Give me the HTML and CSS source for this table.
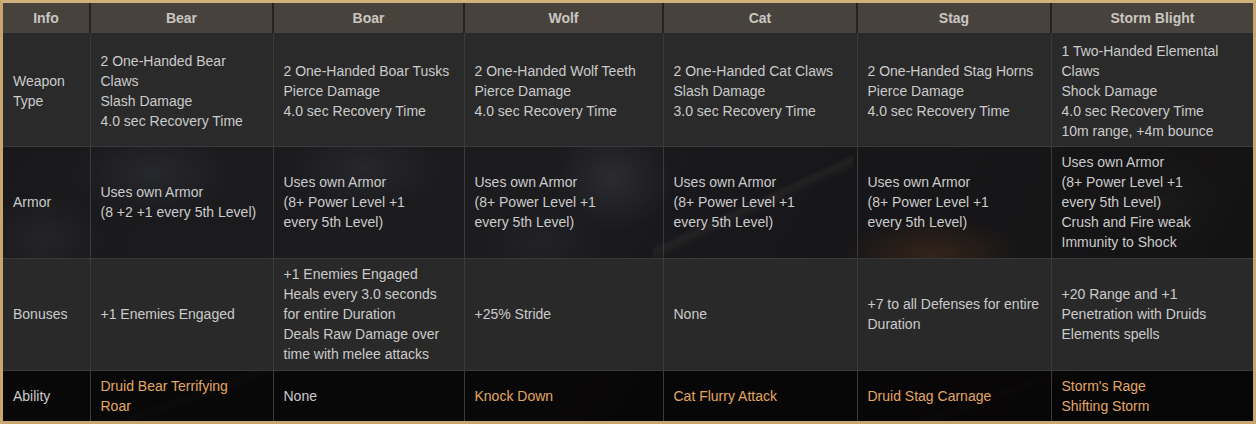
FILE: index.html
```html
<!DOCTYPE html>
<html>
<head>
<meta charset="utf-8">
<link rel="stylesheet" href="styles.css">
</head>
<body>
<div class="frame">
<table class="forms">
<colgroup>
<col class="c-info"><col class="c-bear"><col class="c-boar"><col class="c-wolf"><col class="c-cat"><col class="c-stag"><col class="c-storm">
</colgroup>
<thead>
<tr class="head">
<th>Info</th><th>Bear</th><th>Boar</th><th>Wolf</th><th>Cat</th><th>Stag</th><th>Storm Blight</th>
</tr>
</thead>
<tbody>
<tr class="r-weapon">
<td>Weapon Type</td>
<td>2 One-Handed Bear Claws<br>Slash Damage<br>4.0 sec Recovery Time</td>
<td>2 One-Handed Boar Tusks<br>Pierce Damage<br>4.0 sec Recovery Time</td>
<td>2 One-Handed Wolf Teeth<br>Pierce Damage<br>4.0 sec Recovery Time</td>
<td>2 One-Handed Cat Claws<br>Slash Damage<br>3.0 sec Recovery Time</td>
<td>2 One-Handed Stag Horns<br>Pierce Damage<br>4.0 sec Recovery Time</td>
<td>1 Two-Handed Elemental Claws<br>Shock Damage<br>4.0 sec Recovery Time<br>10m range, +4m bounce</td>
</tr>
<tr class="r-armor">
<td>Armor</td>
<td>Uses own Armor<br>(8 +2 +1 every 5th Level)</td>
<td>Uses own Armor<br>(8+ Power Level +1<br>every 5th Level)</td>
<td>Uses own Armor<br>(8+ Power Level +1<br>every 5th Level)</td>
<td>Uses own Armor<br>(8+ Power Level +1<br>every 5th Level)</td>
<td>Uses own Armor<br>(8+ Power Level +1<br>every 5th Level)</td>
<td>Uses own Armor<br>(8+ Power Level +1<br>every 5th Level)<br>Crush and Fire weak<br>Immunity to Shock</td>
</tr>
<tr class="r-bonus">
<td>Bonuses</td>
<td>+1 Enemies Engaged</td>
<td>+1 Enemies Engaged<br>Heals every 3.0 seconds for entire Duration<br>Deals Raw Damage over time with melee attacks</td>
<td>+25% Stride</td>
<td>None</td>
<td>+7 to all Defenses for entire Duration</td>
<td>+20 Range and +1 Penetration with Druids Elements spells</td>
</tr>
<tr class="r-ability">
<td>Ability</td>
<td><span class="ab">Druid Bear Terrifying<br>Roar</span></td>
<td>None</td>
<td><span class="ab">Knock Down</span></td>
<td><span class="ab">Cat Flurry Attack</span></td>
<td><span class="ab">Druid Stag Carnage</span></td>
<td><span class="ab">Storm's Rage<br>Shifting Storm</span></td>
</tr>
</tbody>
</table>
</div>
</body>
</html>
```

FILE: styles.css
```css
html, body {
  margin: 0;
  padding: 0;
  background: #151413;
}
.frame {
  width: 1256px;
  height: 424px;
  box-sizing: border-box;
  border: 3px solid #c9a56f;
  border-top-color: #d2b07c;
  overflow: hidden;
  background:
    linear-gradient(155deg, transparent 47%, rgba(120,110,100,0.22) 50%, transparent 55%) 650px 145px / 200px 115px no-repeat,
    linear-gradient(160deg, transparent 45%, rgba(110,90,70,0.25) 50%, transparent 56%) 100px 360px / 200px 60px no-repeat,
    linear-gradient(160deg, transparent 45%, rgba(110,90,70,0.2) 50%, transparent 56%) 900px 360px / 200px 60px no-repeat,
    radial-gradient(ellipse 110px 60px at 150px 170px, rgba(95,100,115,0.35), transparent 75%),
    radial-gradient(ellipse 100px 55px at 360px 165px, rgba(95,100,110,0.32), transparent 75%),
    radial-gradient(ellipse 80px 70px at 610px 175px, rgba(110,115,125,0.38), transparent 75%),
    radial-gradient(ellipse 80px 60px at 40px 235px, rgba(90,90,95,0.3), transparent 75%),
    radial-gradient(ellipse 80px 50px at 540px 240px, rgba(80,85,95,0.25), transparent 75%),
    radial-gradient(ellipse 120px 50px at 930px 252px, rgba(140,80,30,0.45), transparent 75%),
    radial-gradient(ellipse 100px 70px at 1150px 200px, rgba(60,55,55,0.3), transparent 75%),
    linear-gradient(120deg, #1c1c1e 0%, #222226 40%, #1a181b 60%, #110f0e 100%);
}
.forms {
  width: 1250px;
  height: 418px;
  table-layout: fixed;
  border-collapse: collapse;
  font-family: "Liberation Sans", Arial, sans-serif;
  font-size: 14px;
  line-height: 20px;
  color: #cbcbcb;
}
.c-info { width: 87px; }
.c-bear { width: 183px; }
.c-boar { width: 191px; }
.c-wolf { width: 199px; }
.c-cat { width: 194px; }
.c-stag { width: 194px; }
.c-storm { width: 202px; }

.forms th {
  height: 30px;
  padding: 0 10px;
  font-weight: bold;
  color: #c9c6c2;
  background: #47423c;
  border-left: 2px solid #26231f;
  text-align: center;
  vertical-align: middle;
}
.forms th:first-child { border-left: none; }
.forms td {
  padding: 5px 10px;
  text-align: left;
  vertical-align: middle;
  border-left: 1px solid #3a3a3a;
  border-top: 1px solid #3a3a3a;
}
.forms td:first-child { border-left: none; }
.r-weapon td { height: 103px; padding-top: 6px; padding-bottom: 4px; background: #2a2a2a; border-top: none; }
.r-armor td { height: 99px; background: rgba(22,22,24,0.45); }
.r-bonus td { height: 101px; background: #292929; }
.r-ability td { height: 38px; background: rgba(6,5,5,0.86); }
.ab { color: #e3a663; }
```
